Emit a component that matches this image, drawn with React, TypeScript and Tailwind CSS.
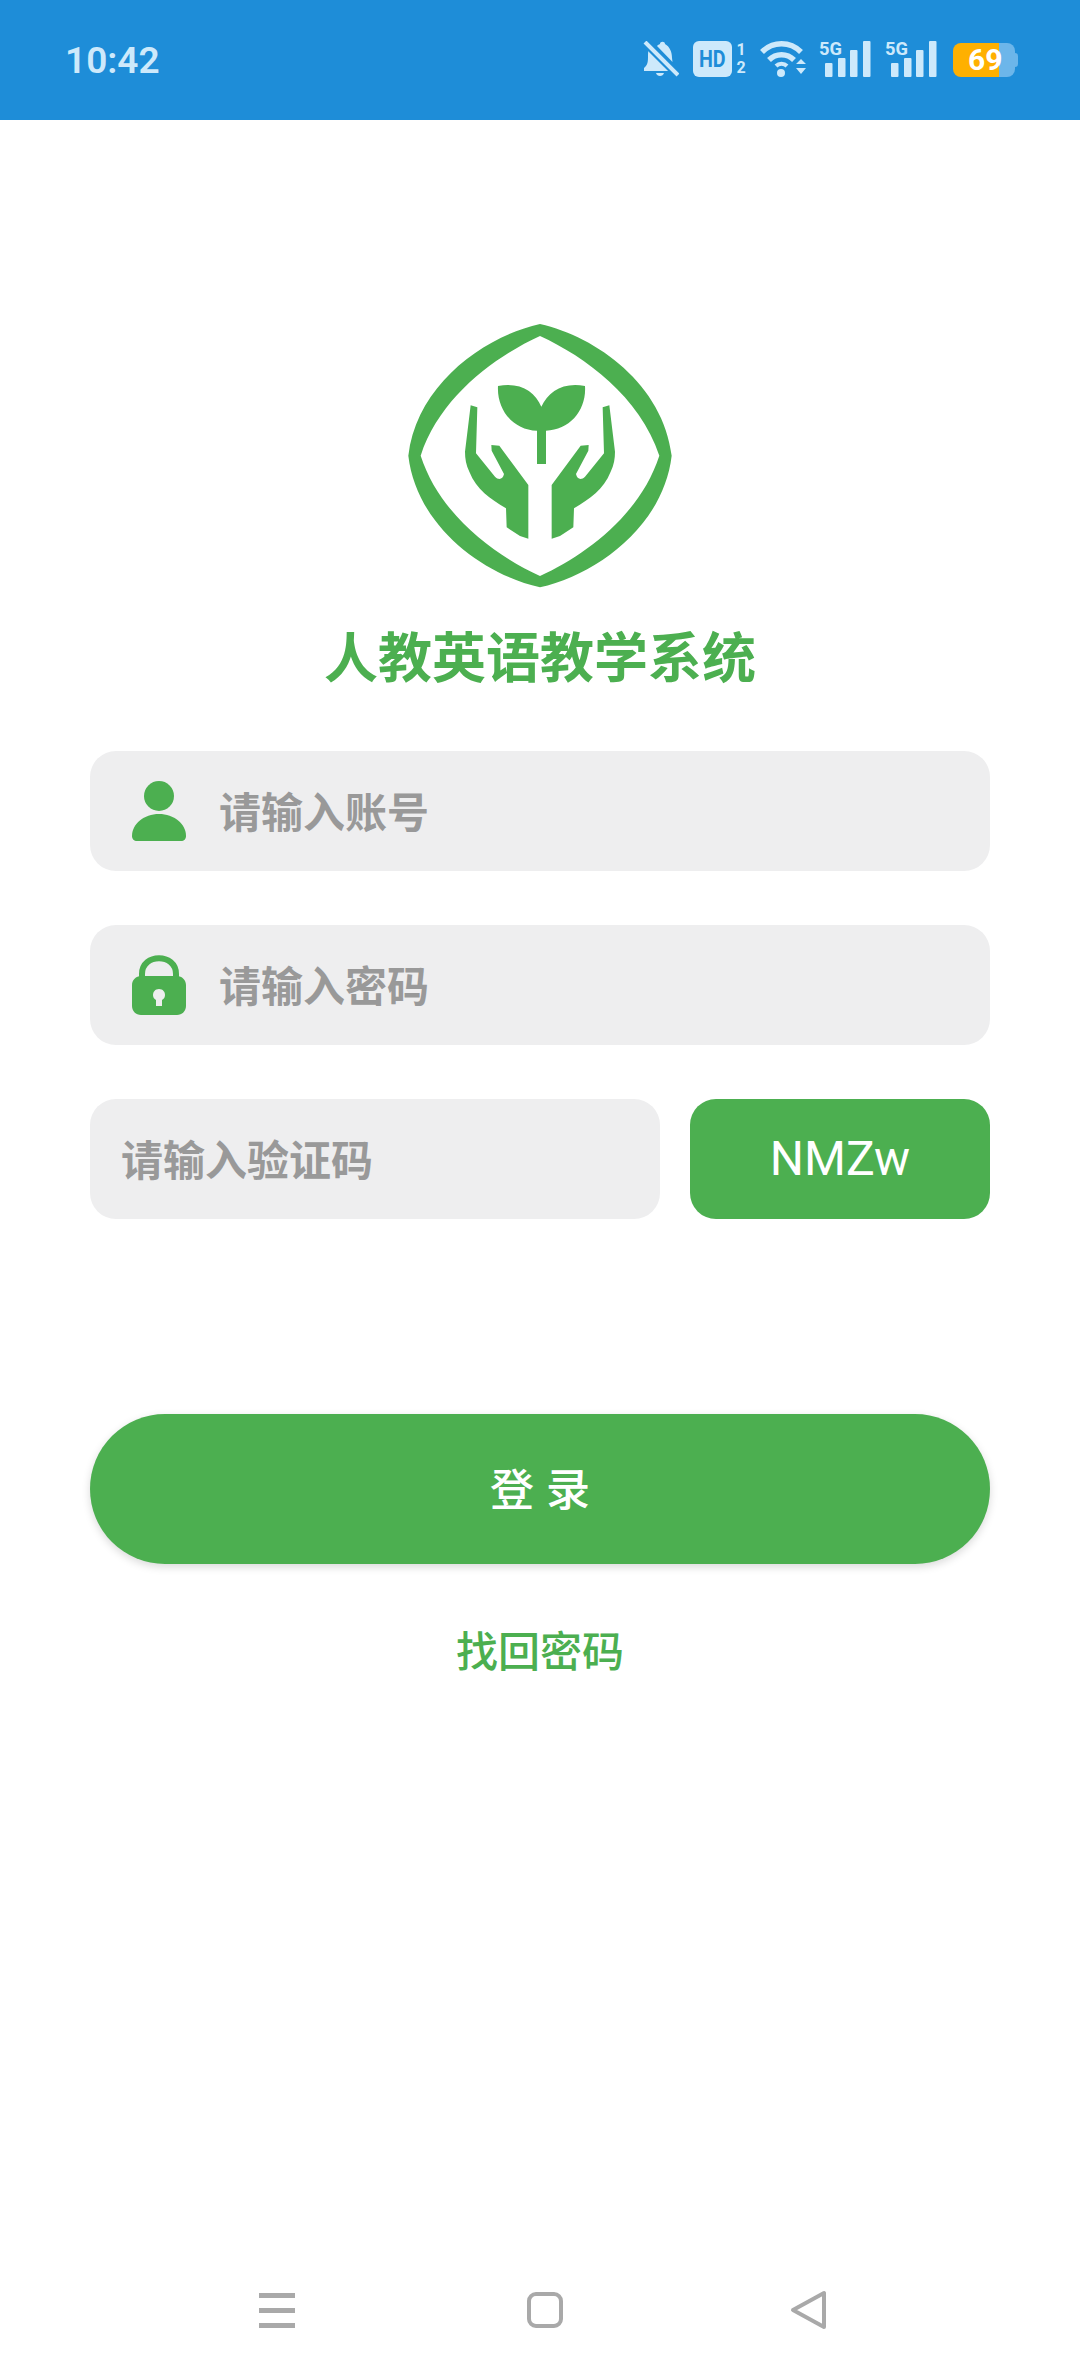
const cjk = "font-['Roboto','Noto_Sans_CJK_SC',sans-serif]";

function BellOff() {
  return (
    <svg width="36" height="36" viewBox="0 0 36 36" fill="#cde9fb">
      <path d="M6 8 L26 30 L1 30 L1 27 C5 24 5 20 5 15 C5 12 5 10 6 8 Z" />
      <path d="M15 4 L17 3 C17 0 22 0 22 3 C27 6 29 11 29 17 L29.500 21 L14 5 Z" />
      <path d="M13 32 L21 32 C20 36 14 36 13 32 Z" />
      <path d="M1 1 L35 35" stroke="#1e8dd8" strokeWidth="7" />
      <path d="M2 1 L35 34" stroke="#cde9fb" strokeWidth="4" />
    </svg>
  );
}

function Wifi() {
  return (
    <svg width="46" height="36" viewBox="0 0 46 36" fill="none">
      <path d="M2 11 C13 0 30 0 41 11" stroke="#cde9fb" strokeWidth="5.500" />
      <path d="M9 19 C16 12 27 12 34 19" stroke="#cde9fb" strokeWidth="5.500" />
      <path d="M16 25 C19 22 24 22 27 25" stroke="#cde9fb" strokeWidth="4" />
      <circle cx="21" cy="32" r="4" fill="#cde9fb" />
      <path d="M36 23 L41 18 L46 23 Z M36 27 L46 27 L41 33 Z" fill="#cde9fb" />
    </svg>
  );
}

function Signal() {
  return (
    <svg width="52" height="37" viewBox="0 0 52 37" overflow="visible">
      <text x="0" y="14" fontFamily="Roboto" fontWeight="700" fontSize="18" textLength="23" lengthAdjust="spacingAndGlyphs" fill="#cde9fb">5G</text>
      <g fill="#cde9fb">
        <rect x="6" y="22" width="7.500" height="14" rx="1" />
        <rect x="19" y="17" width="7.500" height="19" rx="1" />
        <rect x="31" y="9" width="7.500" height="27" rx="1" />
        <rect x="44" y="0" width="7.500" height="36" rx="1" />
      </g>
    </svg>
  );
}

function Battery() {
  return (
    <div className="relative flex h-[34px] w-[65px] items-center">
      <div className="flex h-[34px] w-[62px] overflow-hidden rounded-[8px]">
        <div className="w-[46px] bg-[#ffb000]" />
        <div className="flex-1 bg-[#6cb6ea]" />
      </div>
      <div className="h-[14px] w-[3px] rounded-r-sm bg-[#6cb6ea]" />
      <span className="absolute left-[15px] top-0 text-[30px] leading-[34px] font-bold text-white font-['Roboto',sans-serif]">69</span>
    </div>
  );
}

function StatusBar() {
  return (
    <div className="flex h-[120px] items-start justify-between bg-[#1e8dd8] pl-[65px] pr-[62px] pt-[41px] font-['Roboto',sans-serif]">
      <span className="mt-[1px] text-[37px] leading-[37px] font-semibold text-[#cde9fb]">10:42</span>
      <div className="flex items-start">
        <BellOff />
        <div className="ml-[14px] flex h-[36px] w-[39px] items-center justify-center rounded-[6px] bg-[#cde9fb] text-[24px] font-bold text-[#1e8dd8]">
          <span className="inline-block scale-x-[0.82]">HD</span>
        </div>
        <div className="ml-[4px] flex w-[10px] flex-col items-center text-[16px] leading-[18px] font-bold text-[#cde9fb]">
          <span>1</span>
          <span>2</span>
        </div>
        <div className="ml-[14px]"><Wifi /></div>
        <div className="ml-[13px]"><Signal /></div>
        <div className="ml-[14px]"><Signal /></div>
        <div className="ml-[16px] mt-[2px]"><Battery /></div>
      </div>
    </div>
  );
}

function Logo() {
  const hand = "M272 316 L292 322 L288 460 L345 530 C355 540 368 540 372 522 L335 452 L334 435 L358 437 L445 555 L445 716 L420 708 L380 682 L378 625 C330 595 290 570 268 515 C258 495 255 475 255 455 Z";
  return (
    <svg width="320" height="300" viewBox="0 0 960 900" fill="#4caf50">
      <path
        fillRule="evenodd"
        d="M480 72 C650 110 850 255 875 467 C850 679 650 824 480 862 C310 824 110 679 85 467 C110 255 310 110 480 72 Z M480 108 C615 170 780 290 838 467 C780 646 615 766 480 828 C345 766 180 646 122 467 C180 290 345 170 480 108 Z"
      />
      <path d="M354 258 C420 245 465 275 484 320 C505 275 550 245 615 258 C620 330 570 390 498 392 L498 492 L471 492 L471 392 C400 390 350 330 354 258 Z" />
      <path d={hand} />
      <path d={hand} transform="translate(960 0) scale(-1 1)" />
    </svg>
  );
}

function PersonIcon() {
  return (
    <svg width="54" height="60" viewBox="0 0 54 60" fill="#4caf50">
      <circle cx="27" cy="15" r="15" />
      <path d="M27 33 C42 33 54 43 54 55 C54 58 52 60 49 60 L5 60 C2 60 0 58 0 55 C0 43 12 33 27 33 Z" />
    </svg>
  );
}

function LockIcon() {
  return (
    <svg width="54" height="60" viewBox="0 0 54 60" fill="#4caf50">
      <path d="M10 24 L10 19 C10 -2 44 -2 44 19 L44 24" fill="none" stroke="#4caf50" strokeWidth="6" />
      <path fillRule="evenodd" d="M9 21 L45 21 C50 21 54 25 54 30 L54 51 C54 56 50 60 45 60 L9 60 C4 60 0 56 0 51 L0 30 C0 25 4 21 9 21 Z M27 34 C23 34 21 37 21 40 C21 42 22 44 24 45 L24 51 L30 51 L30 45 C32 44 33 42 33 40 C33 37 31 34 27 34 Z" />
    </svg>
  );
}

function InputRow({ icon, text }: { icon: React.ReactNode; text: string }) {
  return (
    <div className="flex h-[120px] items-center rounded-[26px] bg-[#eeeeef] pl-[42px]">
      {icon}
      <span className="ml-[33px] pt-[4px] text-[42px] font-bold text-[#999999]">{text}</span>
    </div>
  );
}

function NavBar() {
  return (
    <div className="mt-auto flex h-[86px] items-start pl-[259px]">
      <div className="mt-[3px] flex w-[36px] flex-col gap-[10px]">
        <div className="h-[5px] bg-[#a9a9a9]" />
        <div className="h-[5px] bg-[#a9a9a9]" />
        <div className="h-[5px] bg-[#a9a9a9]" />
      </div>
      <div className="ml-[232px] mt-[2px] h-[36px] w-[36px] rounded-[9px] border-[4px] border-[#a9a9a9]" />
      <svg className="ml-[227px]" width="37" height="40" viewBox="0 0 37 40" fill="none">
        <path d="M34 3 L34 37 L3 20 Z" stroke="#a9a9a9" strokeWidth="4" strokeLinejoin="round" />
      </svg>
    </div>
  );
}

export default function App() {
  return (
    <div className={`flex min-h-[2376px] flex-col bg-white ${cjk}`}>
      <StatusBar />
      <div className="flex flex-col items-center px-[90px]">
        <div className="mt-[180px]"><Logo /></div>
        <h1 className="mt-[20px] text-[54px] leading-[80px] font-bold text-[#4caf50]">人教英语教学系统</h1>
        <div className="mt-[51px] flex w-full flex-col gap-[54px]">
          <InputRow icon={<PersonIcon />} text="请输入账号" />
          <InputRow icon={<LockIcon />} text="请输入密码" />
          <div className="flex gap-[30px]">
            <div className="flex h-[120px] flex-1 items-center rounded-[26px] bg-[#eeeeef] pl-[31px]">
              <span className="pt-[4px] text-[42px] font-bold text-[#999999]">请输入验证码</span>
            </div>
            <div className="flex h-[120px] w-[300px] items-center justify-center rounded-[26px] bg-[#4caf50] text-[48px] text-white">NMZw</div>
          </div>
        </div>
        <button className="mt-[195px] flex h-[150px] w-full items-center justify-center rounded-full bg-[#4caf50] pl-[12px] pt-[4px] text-[44px] font-medium tracking-[12px] text-white shadow-[0_3px_8px_rgba(0,0,0,0.15)]">登录</button>
        <div className="mt-[57px] text-[42px] leading-[64px] font-medium text-[#4caf50]">找回密码</div>
      </div>
      <NavBar />
    </div>
  );
}
